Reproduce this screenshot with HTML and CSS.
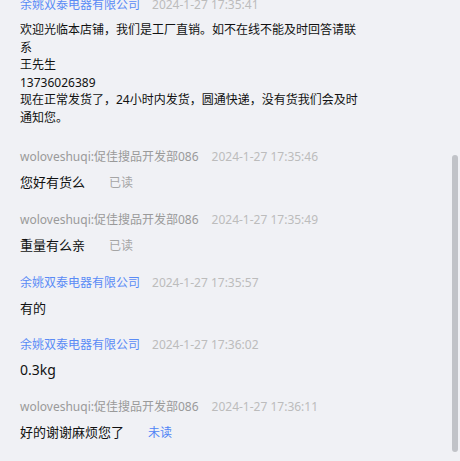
FILE: index.html
```html
<!doctype html>
<html>
<head>
<meta charset='utf-8' />
<title>聊天记录</title>
<link rel="stylesheet" href="styles.css">
</head>
<body>
<div class="chat">
	<div class="list">
		<div class="item">
			<div class="head"><span class="name shop">余姚双泰电器有限公司</span><span class="time">2024-1-27 17:35:41</span></div>
			<div class="msg long">欢迎光临本店铺，我们是工厂直销。如不在线不能及时回答请联系<br>王先生<br>13736026389<br>现在正常发货了，24小时内发货，圆通快递，没有货我们会及时通知您。</div>
		</div>
		<div class="item">
			<div class="head"><span class="name">woloveshuqi:促佳搜品开发部086</span><span class="time">2024-1-27 17:35:46</span></div>
			<div class="msg">您好有货么<span class="state">已读</span></div>
		</div>
		<div class="item">
			<div class="head"><span class="name">woloveshuqi:促佳搜品开发部086</span><span class="time">2024-1-27 17:35:49</span></div>
			<div class="msg">重量有么亲<span class="state">已读</span></div>
		</div>
		<div class="item">
			<div class="head"><span class="name shop">余姚双泰电器有限公司</span><span class="time">2024-1-27 17:35:57</span></div>
			<div class="msg">有的</div>
		</div>
		<div class="item">
			<div class="head"><span class="name shop">余姚双泰电器有限公司</span><span class="time">2024-1-27 17:36:02</span></div>
			<div class="msg big">0.3kg</div>
		</div>
		<div class="item">
			<div class="head"><span class="name">woloveshuqi:促佳搜品开发部086</span><span class="time">2024-1-27 17:36:11</span></div>
			<div class="msg">好的谢谢麻烦您了<span class="state unread">未读</span></div>
		</div>
	</div>
	<div class="thumb"></div>
</div>
</body>
</html>
```
FILE: styles.css
```css
*{margin: 0;padding: 0;}
html,body{height: 100%;}
body{background: #f0f1f5;font-family: "Noto Sans", "Noto Sans CJK SC", sans-serif;color: #111;}
.chat{position: relative;height: 461px;overflow: hidden;}
.list{margin-top: -5px;padding-left: 20px;}
.item{padding-bottom: 17px;}
.head{line-height: 20px;font-size: 12px;white-space: nowrap;}
.name{color: #9a9a9a;}
.name.shop{color: #5a8bf5;}
.time{color: #bcbcbc;margin-left: 12px;}
.name + .time{margin-left: 13px;}
.name.shop + .time{margin-left: 12px;}
.msg{margin-top: 5px;line-height: 20px;font-size: 13px;}
.msg.long{width: 340px;font-size: 12px;line-height: 17.6px;margin-top: 6px;padding-bottom: 3px;}
.msg.big{font-size: 14px;}
.state{font-size: 12px;color: #a5a5a5;margin-left: 24px;}
.state.unread{color: #4f84f5;}
.thumb{position: absolute;left: 452px;top: 155px;width: 6px;height: 297px;border-radius: 3px;background: #c1c3c8;}
```
